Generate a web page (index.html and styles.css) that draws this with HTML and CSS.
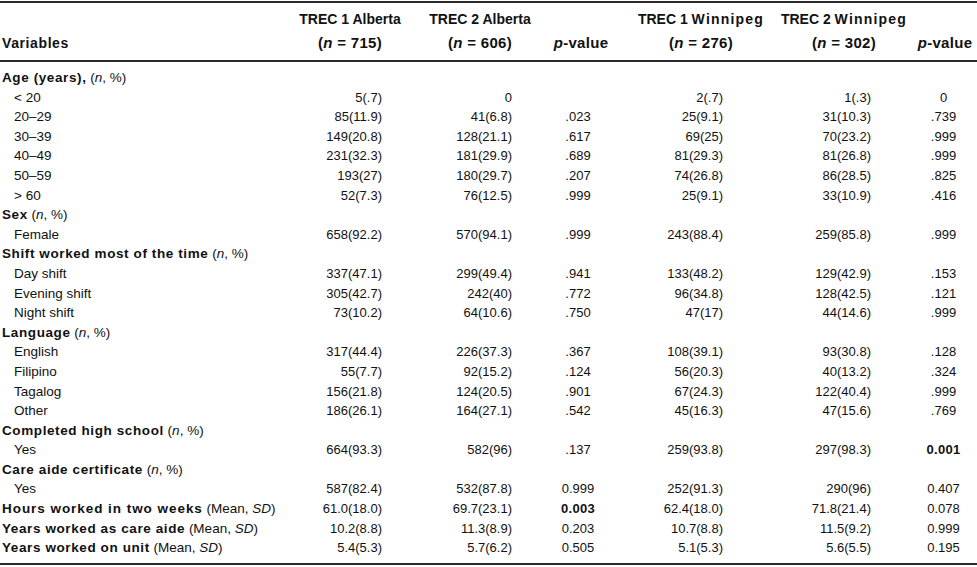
FILE: index.html
```html
<!DOCTYPE html>
<html lang="en">
<head>
<meta charset="utf-8">
<title>Table</title>
<link rel="stylesheet" href="styles.css">
</head>
<body>
<table class="tbl">
  <colgroup>
    <col class="w0"><col class="w1"><col class="w2"><col class="w3"><col class="w4"><col class="w5"><col class="w6">
  </colgroup>
  <thead>
    <tr>
      <th class="h0"><div class="hd"><span>&nbsp;</span><span class="vr">Variables</span></div></th>
      <th class="h1"><div class="hd"><span>TREC 1 Alberta</span><span class="nl">(<i>n</i> = 715)</span></div></th>
      <th class="h2"><div class="hd"><span>TREC 2 Alberta</span><span class="nl">(<i>n</i> = 606)</span></div></th>
      <th class="h3"><div class="hd"><span>&nbsp;</span><span class="nl"><i>p</i>-value</span></div></th>
      <th class="h4"><div class="hd"><span>TREC 1 <span class="wp">Winnipeg</span></span><span class="nl">(<i>n</i> = 276)</span></div></th>
      <th class="h5"><div class="hd"><span>TREC 2 <span class="wp">Winnipeg</span></span><span class="nl">(<i>n</i> = 302)</span></div></th>
      <th class="h6"><div class="hd"><span>&nbsp;</span><span class="nl"><i>p</i>-value</span></div></th>
    </tr>
  </thead>
  <tbody>
    <tr><td class="lab"><b>Age (years),</b> (<i>n</i>, %)</td><td></td><td></td><td></td><td></td><td></td><td></td></tr>
    <tr><td class="sub">&lt; 20</td><td class="n1">5(.7)</td><td class="n2">0</td><td class="p1"></td><td class="n4">2(.7)</td><td class="n5">1(.3)</td><td class="p2">0</td></tr>
    <tr><td class="sub">20–29</td><td class="n1">85(11.9)</td><td class="n2">41(6.8)</td><td class="p1">.023</td><td class="n4">25(9.1)</td><td class="n5">31(10.3)</td><td class="p2">.739</td></tr>
    <tr><td class="sub">30–39</td><td class="n1">149(20.8)</td><td class="n2">128(21.1)</td><td class="p1">.617</td><td class="n4">69(25)</td><td class="n5">70(23.2)</td><td class="p2">.999</td></tr>
    <tr><td class="sub">40–49</td><td class="n1">231(32.3)</td><td class="n2">181(29.9)</td><td class="p1">.689</td><td class="n4">81(29.3)</td><td class="n5">81(26.8)</td><td class="p2">.999</td></tr>
    <tr><td class="sub">50–59</td><td class="n1">193(27)</td><td class="n2">180(29.7)</td><td class="p1">.207</td><td class="n4">74(26.8)</td><td class="n5">86(28.5)</td><td class="p2">.825</td></tr>
    <tr><td class="sub">&gt; 60</td><td class="n1">52(7.3)</td><td class="n2">76(12.5)</td><td class="p1">.999</td><td class="n4">25(9.1)</td><td class="n5">33(10.9)</td><td class="p2">.416</td></tr>
    <tr><td class="lab"><b>Sex</b> (<i>n</i>, %)</td><td></td><td></td><td></td><td></td><td></td><td></td></tr>
    <tr><td class="sub">Female</td><td class="n1">658(92.2)</td><td class="n2">570(94.1)</td><td class="p1">.999</td><td class="n4">243(88.4)</td><td class="n5">259(85.8)</td><td class="p2">.999</td></tr>
    <tr><td class="lab"><b>Shift worked most of the time</b> (<i>n</i>, %)</td><td></td><td></td><td></td><td></td><td></td><td></td></tr>
    <tr><td class="sub">Day shift</td><td class="n1">337(47.1)</td><td class="n2">299(49.4)</td><td class="p1">.941</td><td class="n4">133(48.2)</td><td class="n5">129(42.9)</td><td class="p2">.153</td></tr>
    <tr><td class="sub">Evening shift</td><td class="n1">305(42.7)</td><td class="n2">242(40)</td><td class="p1">.772</td><td class="n4">96(34.8)</td><td class="n5">128(42.5)</td><td class="p2">.121</td></tr>
    <tr><td class="sub">Night shift</td><td class="n1">73(10.2)</td><td class="n2">64(10.6)</td><td class="p1">.750</td><td class="n4">47(17)</td><td class="n5">44(14.6)</td><td class="p2">.999</td></tr>
    <tr><td class="lab"><b>Language</b> (<i>n</i>, %)</td><td></td><td></td><td></td><td></td><td></td><td></td></tr>
    <tr><td class="sub">English</td><td class="n1">317(44.4)</td><td class="n2">226(37.3)</td><td class="p1">.367</td><td class="n4">108(39.1)</td><td class="n5">93(30.8)</td><td class="p2">.128</td></tr>
    <tr><td class="sub">Filipino</td><td class="n1">55(7.7)</td><td class="n2">92(15.2)</td><td class="p1">.124</td><td class="n4">56(20.3)</td><td class="n5">40(13.2)</td><td class="p2">.324</td></tr>
    <tr><td class="sub">Tagalog</td><td class="n1">156(21.8)</td><td class="n2">124(20.5)</td><td class="p1">.901</td><td class="n4">67(24.3)</td><td class="n5">122(40.4)</td><td class="p2">.999</td></tr>
    <tr><td class="sub">Other</td><td class="n1">186(26.1)</td><td class="n2">164(27.1)</td><td class="p1">.542</td><td class="n4">45(16.3)</td><td class="n5">47(15.6)</td><td class="p2">.769</td></tr>
    <tr><td class="lab"><b>Completed high school</b> (<i>n</i>, %)</td><td></td><td></td><td></td><td></td><td></td><td></td></tr>
    <tr><td class="sub">Yes</td><td class="n1">664(93.3)</td><td class="n2">582(96)</td><td class="p1">.137</td><td class="n4">259(93.8)</td><td class="n5">297(98.3)</td><td class="p2"><b>0.001</b></td></tr>
    <tr><td class="lab"><b>Care aide certificate</b> (<i>n</i>, %)</td><td></td><td></td><td></td><td></td><td></td><td></td></tr>
    <tr><td class="sub">Yes</td><td class="n1">587(82.4)</td><td class="n2">532(87.8)</td><td class="p1">0.999</td><td class="n4">252(91.3)</td><td class="n5">290(96)</td><td class="p2">0.407</td></tr>
    <tr><td class="lab"><b class="wide">Hours worked in two weeks</b> (Mean, <i>SD</i>)</td><td class="n1">61.0(18.0)</td><td class="n2">69.7(23.1)</td><td class="p1"><b>0.003</b></td><td class="n4">62.4(18.0)</td><td class="n5">71.8(21.4)</td><td class="p2">0.078</td></tr>
    <tr><td class="lab"><b>Years worked as care aide</b> (Mean, <i>SD</i>)</td><td class="n1">10.2(8.8)</td><td class="n2">11.3(8.9)</td><td class="p1">0.203</td><td class="n4">10.7(8.8)</td><td class="n5">11.5(9.2)</td><td class="p2">0.999</td></tr>
    <tr><td class="lab"><b>Years worked on unit</b> (Mean, <i>SD</i>)</td><td class="n1">5.4(5.3)</td><td class="n2">5.7(6.2)</td><td class="p1">0.505</td><td class="n4">5.1(5.3)</td><td class="n5">5.6(5.5)</td><td class="p2">0.195</td></tr>
  </tbody>
</table>
</body>
</html>
```
FILE: styles.css
```css
html, body {
  margin: 0;
  padding: 0;
  background: #ffffff;
}

body {
  font-family: "Liberation Sans", Arial, sans-serif;
  color: #111111;
}

.tbl {
  width: 977px;
  margin-top: 1px;
  border-collapse: collapse;
  table-layout: fixed;
  border-bottom: 2px solid #2a2a2a;
}

.w0 { width: 290px; }
.w1 { width: 125px; }
.w2 { width: 115px; }
.w3 { width: 108px; }
.w4 { width: 130px; }
.w5 { width: 124px; }
.w6 { width: 85px; }

thead th {
  border-top: 2px solid #2a2a2a;
  border-bottom: 2px solid #2a2a2a;
  padding: 4px 0 5px 0;
  vertical-align: bottom;
  font-size: 14px;
  font-weight: bold;
  white-space: nowrap;
}

.hd {
  display: flex;
  flex-direction: column;
  align-items: center;
  line-height: 24px;
}

.nl {
  font-size: 15px;
  letter-spacing: 0.3px;
}

.vr {
  font-size: 14px;
  letter-spacing: 0.6px;
}

.wp { letter-spacing: 1.2px; }

.h0 .hd { align-items: flex-start; padding-left: 2px; }
.h1 { padding-right: 5px; }
.h2 { padding-left: 15px; }
.h3 { padding-right: 6px; }
.h4 { padding-right: 4px; }
.h5 { padding-left: 28px; }
.h6 { padding-left: 21px; }

tbody td {
  padding: 0;
  height: 19.6px;
  line-height: 19.6px;
  font-size: 13px;
  white-space: nowrap;
  vertical-align: middle;
}

tbody tr:first-child td { padding-top: 6px; }
tbody tr:last-child td { padding-bottom: 5px; }

.lab {
  font-size: 13.5px;
  padding-left: 2px;
}

.lab b { letter-spacing: 0.6px; }
.lab b.wide { letter-spacing: 0.95px; }

.sub {
  font-size: 13.5px;
  padding-left: 14px;
}

.n1, .n2, .n4, .n5 { text-align: right; }
.n1 { padding-right: 33px; }
.n2 { padding-right: 18px; }
.n4 { padding-right: 45px; }
.n5 { padding-right: 21px; }

.p1 { text-align: center; padding-right: 12px; }
.p2 { text-align: center; padding-left: 18px; }

.p1 b, .p2 b { letter-spacing: 0.3px; }
```
